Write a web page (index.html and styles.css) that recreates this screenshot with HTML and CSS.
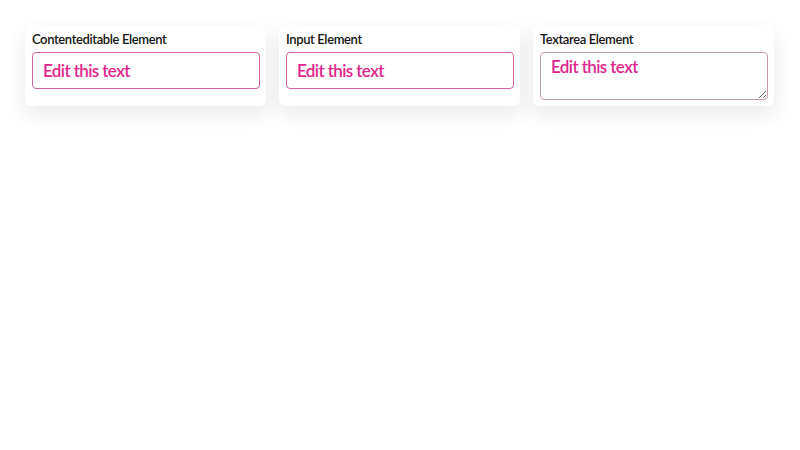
FILE: index.html
```html
<!DOCTYPE html>
<html>
<head>
<meta charset="utf-8">
<link rel="stylesheet" href="styles.css">
</head>
<body>
<div class="grid">
  <div class="card">
    <label class="label">Contenteditable Element</label>
    <div class="field editable" contenteditable="true">Edit this text</div>
  </div>
  <div class="card">
    <label class="label">Input Element</label>
    <input class="field input" type="text" value="Edit this text">
  </div>
  <div class="card">
    <label class="label">Textarea Element</label>
    <textarea class="field area">Edit this text</textarea>
  </div>
</div>
</body>
</html>
```
FILE: styles.css
```css
html, body {
  margin: 0;
  background: #fff;
}
body {
  font-family: Lato, "Noto Sans", sans-serif;
}
.grid {
  display: grid;
  grid-template-columns: repeat(3, 241px);
  gap: 13px;
  padding: 25px;
}
.card {
  background: #fff;
  border-radius: 6px;
  padding: 7px 7px 6px;
  box-shadow: 0 8px 22px rgba(0, 0, 0, 0.09);
  display: flex;
  flex-direction: column;
}
.label {
  display: block;
  font-size: 13px;
  font-weight: 600;
  color: #151515;
  line-height: 14px;
  margin-bottom: 6px;
  letter-spacing: -0.38px;
}
.field {
  box-sizing: border-box;
  width: 228px;
  border: 1px solid #d462a0;
  border-radius: 4px;
  font-family: Lato, "Noto Sans", sans-serif;
  font-size: 17px;
  font-weight: 600;
  letter-spacing: -0.6px;
  color: #e0268c;
  outline: none;
  background: #fff;
  margin: 0;
}
.editable, .input {
  height: 37px;
  padding: 0 10px;
  line-height: 35px;
}
.area {
  display: block;
  height: 48px;
  padding: 3px 10px;
  line-height: 22px;
  border-color: #c69cb6;
  resize: vertical;
}
```
